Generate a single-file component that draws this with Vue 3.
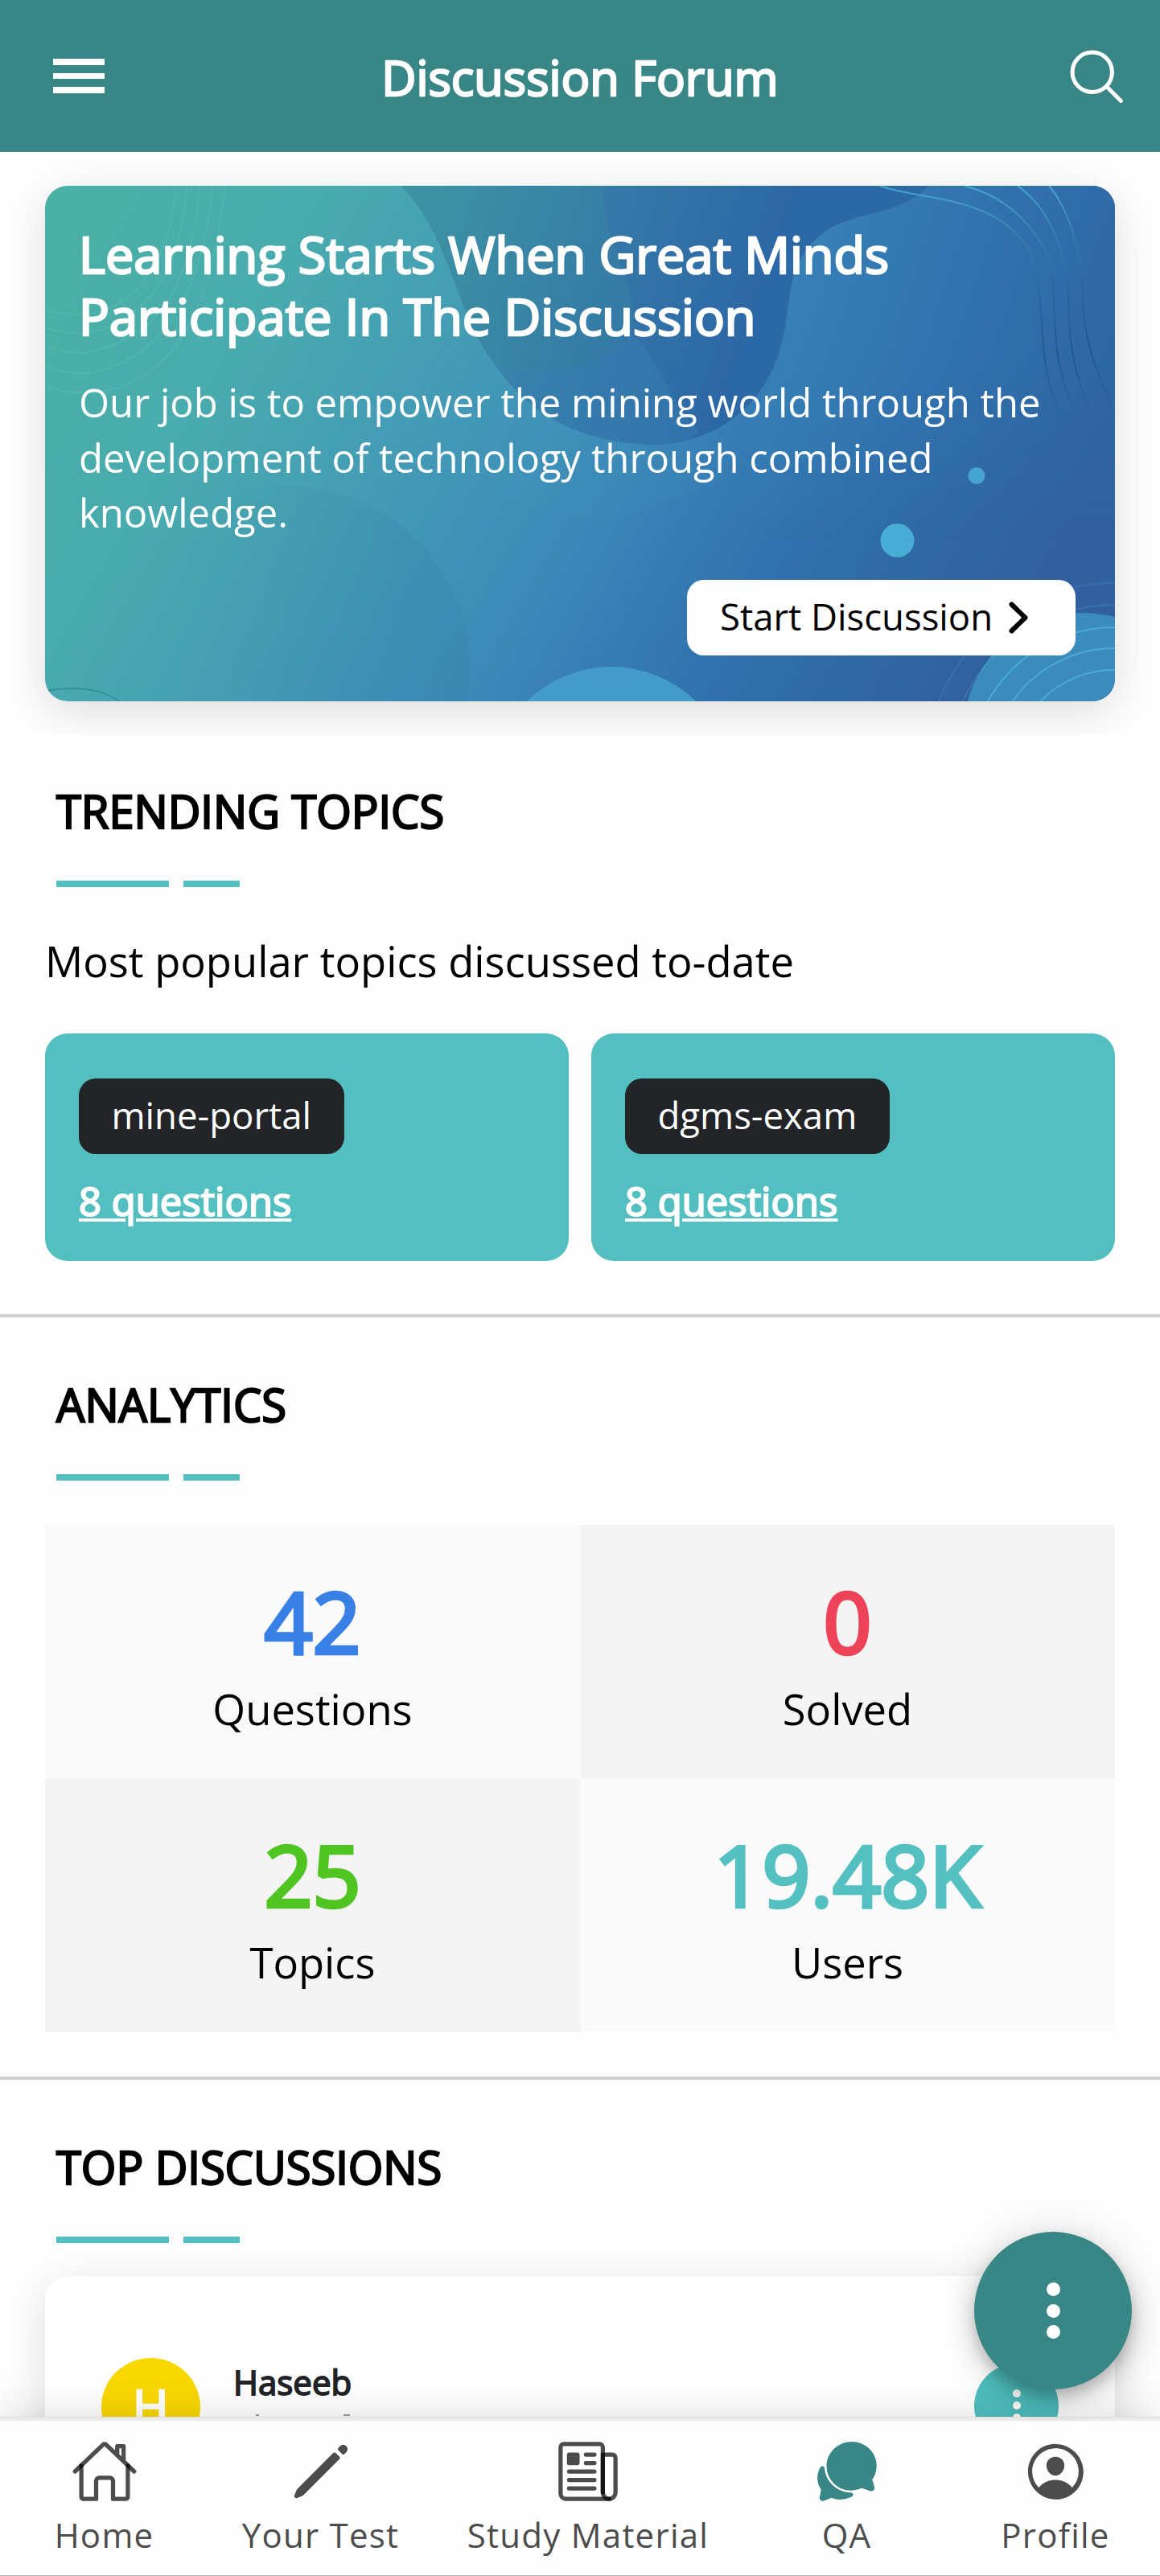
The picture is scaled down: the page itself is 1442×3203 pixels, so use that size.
<script setup>
const topics = [
  { tag: 'mine-portal', count: '8 questions' },
  { tag: 'dgms-exam', count: '8 questions' },
]

const stats = [
  { value: '42', label: 'Questions', tone: 'blue' },
  { value: '0', label: 'Solved', tone: 'red' },
  { value: '25', label: 'Topics', tone: 'green' },
  { value: '19.48K', label: 'Users', tone: 'teal' },
]

const tabs = [
  { id: 'home', label: 'Home' },
  { id: 'test', label: 'Your Test' },
  { id: 'study', label: 'Study Material' },
  { id: 'qa', label: 'QA' },
  { id: 'profile', label: 'Profile' },
]
</script>

<template>
  <div class="screen">
    <header class="bar">
      <button class="menu" aria-label="Menu"><i /><i /><i /></button>
      <h1 class="bar-title">Discussion Forum</h1>
      <div class="search">
        <svg viewBox="0 0 512 512" fill="none" stroke="#fff" stroke-width="32" stroke-linecap="round">
          <path d="M221.09 64a157.09 157.09 0 10157.09 157.09A157.1 157.1 0 00221.09 64zM338.29 338.29L448 448" />
        </svg>
      </div>
    </header>

    <section class="hero">
      <div class="banner">
        <svg class="art" viewBox="0 0 1330 641" preserveAspectRatio="none" fill="none">
          <defs>
            <linearGradient id="base" gradientUnits="userSpaceOnUse" x1="60" y1="0" x2="1150" y2="640">
              <stop offset="0" stop-color="#4bb0a5" />
              <stop offset=".2" stop-color="#49abae" />
              <stop offset=".36" stop-color="#459eb4" />
              <stop offset=".52" stop-color="#3f90b9" />
              <stop offset=".65" stop-color="#387fb6" />
              <stop offset=".76" stop-color="#3172ae" />
              <stop offset=".88" stop-color="#2f69a5" />
              <stop offset="1" stop-color="#32609f" />
            </linearGradient>
            <linearGradient id="blob" gradientUnits="userSpaceOnUse" x1="470" y1="40" x2="870" y2="180">
              <stop offset="0" stop-color="#3d90a4" />
              <stop offset=".5" stop-color="#3579a8" />
              <stop offset="1" stop-color="#2d68a6" />
            </linearGradient>
            <linearGradient id="right" gradientUnits="userSpaceOnUse" x1="900" y1="100" x2="1330" y2="240">
              <stop offset="0" stop-color="#3882b7" />
              <stop offset=".5" stop-color="#3173af" />
              <stop offset="1" stop-color="#2e66a4" />
            </linearGradient>
            <linearGradient id="rightFade" x1="0" y1="0" x2="0" y2="1">
              <stop offset="0" stop-color="#fff" />
              <stop offset=".5" stop-color="#fff" />
              <stop offset="1" stop-color="#000" />
            </linearGradient>
            <mask id="rightMask" maskUnits="userSpaceOnUse" x="800" y="0" width="530" height="440">
              <rect x="800" width="530" height="440" fill="url(#rightFade)" />
            </mask>
            <linearGradient id="shade" gradientUnits="userSpaceOnUse" x1="160" y1="0" x2="530" y2="0">
              <stop offset="0" stop-color="#24708f" stop-opacity="0" />
              <stop offset="1" stop-color="#24708f" stop-opacity=".15" />
            </linearGradient>
            <linearGradient id="wave" gradientUnits="userSpaceOnUse" x1="0" y1="0" x2="0" y2="300">
              <stop offset="0" stop-color="#4bb4d8" stop-opacity=".85" />
              <stop offset=".28" stop-color="#3f8cc4" stop-opacity=".2" />
              <stop offset=".4" stop-color="#255a98" stop-opacity=".35" />
              <stop offset=".7" stop-color="#1e4b8a" stop-opacity=".7" />
              <stop offset="1" stop-color="#2c5c9c" stop-opacity=".15" />
            </linearGradient>
          </defs>
          <rect width="1330" height="641" fill="url(#base)" />
          <path d="M1099 0C1060 38 990 35 950 85C915 135 935 200 890 265L860 440H1330V0Z" fill="url(#right)" mask="url(#rightMask)" />
          <path d="M340 330C420 200 520 195 600 235C720 280 720 340 860 360L700 420Z" fill="#47a0bd" opacity=".1" />
          <circle cx="302" cy="600" r="226" fill="url(#shade)" />
          <path d="M442 0C505 62 510 160 558 220C610 300 690 322 764 322C850 315 905 260 919 180C930 120 925 90 972 55C1020 28 1060 38 1099 0Z" fill="url(#blob)" />
          <path d="M442 0C505 62 510 160 558 220C610 245 690 230 730 180C740 120 690 70 695 0Z" fill="#3f9ba3" opacity=".18" />
          <path d="M558 220C610 300 690 322 764 322C790 320 800 315 815 305C770 265 770 220 730 185C680 230 620 240 558 220Z" fill="#3f93c0" opacity=".22" />
          <path d="M735 180C790 220 800 300 900 350C1020 380 1140 350 1260 320" stroke="#2c66a4" stroke-opacity=".08" stroke-width="4" />
          <g stroke="#7fdccb" stroke-opacity=".16" stroke-width="2">
            <path d="M162 0C155 90 120 150 50 160Q20 160 0 154" />
            <path d="M176 0C169 105 130 165 52 184Q20 184 0 176" />
            <path d="M192 0C183 125 140 190 50 208Q20 208 0 196" />
            <path d="M208 0C195 140 145 215 55 233Q20 235 0 221" />
            <path d="M224 0C206 160 160 245 62 257Q20 260 0 246" />
          </g>
          <g stroke="url(#wave)" stroke-width="2">
            <path d="M1038 0C1085 18 1180 10 1224 80C1242 120 1236 190 1246 235C1252 270 1270 295 1290 320" />
            <path d="M1143 0C1190 12 1230 45 1250 95C1258 150 1250 200 1270 255Q1285 300 1330 375" />
            <path d="M1209 0C1245 25 1268 75 1272 130C1272 190 1278 250 1310 290Q1320 310 1330 318" />
            <path d="M1248 0C1272 28 1288 80 1290 130C1290 180 1300 220 1330 280" />
          </g>
          <circle cx="1290" cy="679" r="148" fill="#3b8bbc" />
          <g stroke="#4db4d6" stroke-opacity=".8" stroke-width="2">
            <circle cx="1329" cy="729" r="180" />
            <circle cx="1329" cy="729" r="154" />
            <circle cx="1329" cy="729" r="127" />
            <circle cx="1329" cy="729" r="208" stroke-opacity=".22" />
            <circle cx="1329" cy="729" r="235" stroke-opacity=".18" />
          </g>
          <circle cx="704" cy="748" r="150" fill="#439bc8" />
          <circle cx="1059.500" cy="441" r="21" fill="#48acd5" />
          <circle cx="1158" cy="360.500" r="10.500" fill="#46a5d0" />
          <path d="M0 628Q60 618 92 641" stroke="#38909b" stroke-width="2" />
        </svg>
        <div class="banner-body">
          <h2>Learning Starts When Great Minds<br />Participate In The Discussion</h2>
          <p>Our job is to empower the mining world through the development of technology through combined knowledge.</p>
          <button class="start">
            <span>Start Discussion</span>
            <svg viewBox="0 0 24 40" fill="none" stroke="#000" stroke-width="6" stroke-linecap="round" stroke-linejoin="round">
              <path d="M3.500 3.500L20.500 20L3.500 36.500" />
            </svg>
          </button>
        </div>
      </div>
    </section>

    <section class="block trending">
      <h3>TRENDING TOPICS</h3>
      <div class="rule"><i /><i /></div>
      <p class="lead">Most popular topics discussed to-date</p>
      <div class="topics">
        <article v-for="t in topics" :key="t.tag" class="topic">
          <span class="chip">{{ t.tag }}</span>
          <a>{{ t.count }}</a>
        </article>
      </div>
    </section>

    <section class="block analytics">
      <h3>ANALYTICS</h3>
      <div class="rule"><i /><i /></div>
      <div class="stats">
        <div v-for="s in stats" :key="s.label" class="stat">
          <strong :class="s.tone">{{ s.value }}</strong>
          <span>{{ s.label }}</span>
        </div>
      </div>
    </section>

    <section class="block top">
      <h3>TOP DISCUSSIONS</h3>
      <div class="rule"><i /><i /></div>
      <article class="post">
        <div class="avatar">H</div>
        <div class="who">
          <b>Haseeb</b>
          <div class="meta"><i /><i /></div>
        </div>
        <div class="more"><i /><i /><i /></div>
      </article>
    </section>

    <nav class="tabs">
      <a v-for="t in tabs" :key="t.id" class="tab">
        <svg v-if="t.id === 'home'" viewBox="0 0 512 512" class="line">
          <path d="M80 212v236a16 16 0 0016 16h96V328a24 24 0 0124-24h80a24 24 0 0124 24v136h96a16 16 0 0016-16V212" />
          <path d="M480 256L266.89 52c-5-5.28-16.69-5.34-21.78 0L32 256M400 179V64h-48v69" />
        </svg>
        <svg v-else-if="t.id === 'test'" viewBox="0 0 512 512" class="solid">
          <path d="M358.620 129.280L86.490 402.080 70 442l39.920-16.490 272.800-272.130-24.100-24.100zM413.070 74.840l-11.790 11.780 24.100 24.100 11.790-11.790a16.510 16.510 0 000-23.290l-.81-.8a16.510 16.510 0 00-23.290 0z" stroke-width="32" stroke-linejoin="round" />
        </svg>
        <svg v-else-if="t.id === 'study'" viewBox="0 0 512 512" class="line">
          <path d="M368 415.860V72a24.070 24.070 0 00-24-24H72a24.070 24.070 0 00-24 24v352a40.120 40.120 0 0040 40h328" />
          <path d="M416 464h0a48 48 0 01-48-48V128h72a24 24 0 0124 24v264a48 48 0 01-48 48z" />
          <path d="M240 128h64M240 192h64M112 256h192M112 320h192M112 384h192" />
          <path class="dot" d="M176 208h-64a16 16 0 01-16-16v-64a16 16 0 0116-16h64a16 16 0 0116 16v64a16 16 0 01-16 16z" />
        </svg>
        <svg v-else-if="t.id === 'qa'" viewBox="0 0 512 512" class="active">
          <path d="M439.900 405.600a26.770 26.770 0 01-9.590-2l-56.780-20.130-.42-.17a9.880 9.880 0 00-3.910-.76 10.320 10.320 0 00-3.620.66c-1.380.52-13.810 5.190-26.850 8.770-7.070 1.940-31.680 8.270-51.430 8.270-50.480 0-97.680-19.400-132.890-54.630A183.380 183.380 0 01100.300 215.100a175.900 175.900 0 014.060-37.580c8.790-40.620 32.070-77.570 65.550-104A194.760 194.760 0 01290.300 30c52.210 0 100.860 20 137 56.180 34.160 34.270 52.880 79.330 52.730 126.870a177.860 177.860 0 01-30.300 99.150l-.19.28-.74 1c-.17.23-.34.45-.5.68l-.15.27a21.630 21.630 0 00-1.080 2.090l15.740 55.940a26.420 26.420 0 011.120 7.110 24 24 0 01-24.030 26.030z" />
          <path d="M299.870 425.390a15.740 15.740 0 00-10.290-8.100c-5.780-1.530-12.520-1.270-17.670-1.650a201.780 201.780 0 01-128.820-58.750A199.210 199.210 0 0186.400 244.160C85 234.420 85 232 85 232a16 16 0 00-28-10.580s-7.880 8.580-11.600 17.190a162.090 162.090 0 0011 150.060C59 393 59 395 58.420 399.500c-2.730 14.110-7.510 39-10 51.910a24 24 0 008 22.920l.46.390A24.340 24.340 0 0072 480a23.420 23.420 0 009-1.790l53.510-20.650a8.050 8.050 0 015.720 0c21.070 7.840 43 12 63.780 12a176 176 0 0074.910-16.660c5.460-2.560 14-5.340 19-11.120a15 15 0 001.950-16.390z" />
        </svg>
        <svg v-else viewBox="0 0 512 512" class="solid">
          <path d="M258.900 48C141.920 46.420 46.420 141.920 48 258.900c1.560 114.190 94.910 207.540 209.100 209.100 117 1.600 212.480-93.900 210.880-210.880C466.440 142.910 373.090 49.560 258.900 48zm126.420 327.250a4 4 0 01-6.140-.32 124.270 124.270 0 00-32.350-29.590C321.370 329 289.110 320 256 320s-65.370 9-90.830 25.340a124.240 124.240 0 00-32.350 29.580 4 4 0 01-6.140.32A175.320 175.320 0 0180 259c-1.630-97.310 78.220-178.760 175.570-179S432 158.810 432 256a175.320 175.320 0 01-46.680 119.250z" stroke="none" />
          <path d="M256 144c-19.720 0-37.550 7.390-50.220 20.820s-19 32-17.570 51.930C191.110 256 221.520 288 256 288s64.830-32 67.790-71.240c1.480-19.740-4.800-38.140-17.680-51.820C293.390 151.440 275.590 144 256 144z" stroke="none" />
        </svg>
        <span>{{ t.label }}</span>
      </a>
    </nav>

    <button class="fab" aria-label="Actions"><i /><i /><i /></button>
  </div>
</template>

<style>
body {
  background: #fefefe;
}
</style>

<style scoped>
* {
  box-sizing: border-box;
  margin: 0;
  padding: 0;
}
.screen {
  position: relative;
  width: 1442px;
  height: 3203px;
  overflow: hidden;
  background: #fefefe;
  color: #000;
  font-family: 'Open Sans', 'Noto Sans', sans-serif;
  font-weight: 400;
}
button {
  border: 0;
  font: inherit;
  color: inherit;
}
h1, h2, h3, strong, b, .topic a, .avatar {
  font-weight: 400;
  -webkit-text-stroke: 0.042em currentColor;
}

.bar {
  display: flex;
  align-items: center;
  height: 189px;
  background: #388786;
  color: #fff;
}
.menu {
  display: flex;
  flex-direction: column;
  gap: 10px;
  width: 130px;
  padding-left: 66px;
  background: none;
}
.menu i {
  height: 7.500px;
  background: #fff;
}
.bar-title {
  flex: 1;
  padding-top: 3px;
  font-size: 59.500px;
  line-height: 86px;
  text-align: center;
}
.search {
  width: 130px;
  padding: 2px 0 0 11px;
}
.search svg {
  display: block;
  width: 80.500px;
  height: 80.500px;
}

.hero {
  height: 724px;
  padding: 42px 56px 0;
  overflow: hidden;
}
.banner {
  position: relative;
  height: 641px;
  border-radius: 28px;
  box-shadow: 0 14px 56px rgba(0, 0, 0, 0.13);
}
.art {
  position: absolute;
  inset: 0;
  width: 100%;
  height: 100%;
  border-radius: 28px;
}
.banner-body {
  position: relative;
  display: flex;
  flex-direction: column;
  padding: 46px 49px 0 42px;
  color: #fff;
}
.banner h2 {
  font-size: 63px;
  line-height: 77px;
  white-space: nowrap;
}
.banner p {
  margin-top: 35px;
  font-size: 49px;
  line-height: 68.600px;
}
.start {
  display: flex;
  align-items: center;
  align-self: flex-end;
  width: 483px;
  height: 94.500px;
  margin-top: 49px;
  padding: 0 41px;
  border-radius: 21px;
  background: #fff;
  color: #000;
  font-size: 45.500px;
  line-height: 62px;
  white-space: nowrap;
}
.start span {
  padding-bottom: 4px;
}
.start svg {
  width: 24px;
  height: 40px;
  margin-left: 20px;
}

.block {
  padding: 0 56px;
}
.block h3 {
  padding-left: 14px;
  font-size: 56px;
  line-height: 76px;
}
.rule {
  display: flex;
  gap: 17.500px;
  margin: 49px 0 0 14px;
}
.rule i {
  width: 140px;
  height: 7.500px;
  background: #54bfc0;
}
.rule i + i {
  width: 70px;
}

.trending {
  padding-top: 57px;
  padding-bottom: 66.500px;
}
.lead {
  margin-top: 56px;
  font-size: 52.500px;
  line-height: 72px;
}
.topics {
  display: grid;
  grid-template-columns: 1fr 1fr;
  gap: 28px;
  margin-top: 54px;
}
.topic {
  display: flex;
  flex-direction: column;
  align-items: flex-start;
  height: 283px;
  padding: 56px 42px 0;
  border-radius: 28px;
  background: #54bfc0;
  color: #fff;
}
.chip {
  height: 94.500px;
  padding: 14.500px 40.500px 0;
  border-radius: 21px;
  background: #222428;
  font-size: 45.500px;
  line-height: 62px;
}
.topic a {
  margin-top: 24px;
  font-size: 49px;
  line-height: 68px;
  text-decoration: underline;
}

.analytics {
  padding-top: 70px;
  padding-bottom: 56px;
  border-top: 4px solid #d0d0d0;
  border-bottom: 4px solid #d0d0d0;
}
.stats {
  display: grid;
  grid-template-columns: 1fr 1fr;
  grid-auto-rows: 315px;
  margin-top: 55.500px;
}
.stat {
  display: flex;
  flex-direction: column;
  align-items: center;
  padding-top: 64px;
  background: #fafafa;
}
.stat:nth-child(2), .stat:nth-child(3) {
  background: #f4f4f4;
}
.stat strong {
  font-size: 105px;
  line-height: 112px;
}
.stat span {
  margin-top: 17px;
  font-size: 52.500px;
  line-height: 72px;
}
.blue { color: #3880e6; }
.red { color: #ed4358; }
.green { color: #50c522; }
.teal { color: #54c0c1; }

.top {
  padding-top: 70px;
}
.post {
  display: flex;
  height: 600px;
  margin-top: 41px;
  padding: 102px 70px 0;
  border-radius: 28px;
  background: #fff;
  box-shadow: 0 14px 56px rgba(0, 0, 0, 0.13);
}
.avatar {
  width: 122.500px;
  height: 122.500px;
  border-radius: 50%;
  background: #f9d800;
  color: #fff;
  font-size: 61px;
  line-height: 120px;
  text-align: center;
}
.who {
  flex: 1;
  padding: 1.500px 0 0 41.500px;
  color: #222428;
}
.who b {
  display: block;
  font-size: 42px;
  line-height: 57px;
}
.meta {
  display: flex;
  gap: 105px;
  padding: 12px 0 0 28px;
}
.meta i {
  width: 4px;
  height: 2px;
  background: #999;
}
.meta i + i {
  width: 8px;
}
.more {
  display: flex;
  flex-direction: column;
  align-items: center;
  justify-content: center;
  gap: 5px;
  width: 105px;
  height: 105px;
  margin-top: 7px;
  border-radius: 50%;
  background: #50bfbf;
}
.more i {
  width: 10px;
  height: 10px;
  border-radius: 50%;
  background: #fff;
}

.tabs {
  position: absolute;
  left: 0;
  right: 0;
  bottom: 0;
  display: grid;
  grid-template-columns: 259px 279px 386px 257px 261px;
  height: 197px;
  border-top: 4px solid #eaeaea;
  border-bottom: 1px solid #b8b8b8;
  background: #fefefe;
  box-shadow: 0 -1px 0 #dcdcdc, 0 0 50px rgba(0, 0, 0, 0.15);
  color: #4c4c4c;
}
.tab {
  display: flex;
  flex-direction: column;
  align-items: center;
  padding-top: 20.500px;
}
.tab:last-child {
  padding-left: 1px;
}
.tab svg {
  width: 84px;
  height: 84px;
}
.tab span {
  margin-top: 8.500px;
  font-size: 42px;
  line-height: 57px;
  letter-spacing: 1.260px;
  white-space: nowrap;
}
.line path {
  fill: none;
  stroke: rgba(0, 0, 0, 0.7);
  stroke-width: 32;
  stroke-linecap: round;
  stroke-linejoin: round;
}
.line .dot {
  fill: rgba(0, 0, 0, 0.7);
  stroke: none;
}
.solid {
  fill: #4c4c4c;
  stroke: #4c4c4c;
}
.active {
  fill: #388786;
}

.fab {
  position: absolute;
  left: 1211px;
  top: 2775px;
  display: flex;
  flex-direction: column;
  align-items: center;
  justify-content: center;
  gap: 9.500px;
  width: 196px;
  height: 196px;
  border-radius: 50%;
  background: #388786;
  box-shadow: 0 10px 18px -3px rgba(0, 0, 0, 0.2), 0 12px 35px rgba(0, 0, 0, 0.14), 0 3px 63px rgba(0, 0, 0, 0.12);
}
.fab i {
  width: 17px;
  height: 17px;
  border-radius: 50%;
  background: #fff;
}
</style>
